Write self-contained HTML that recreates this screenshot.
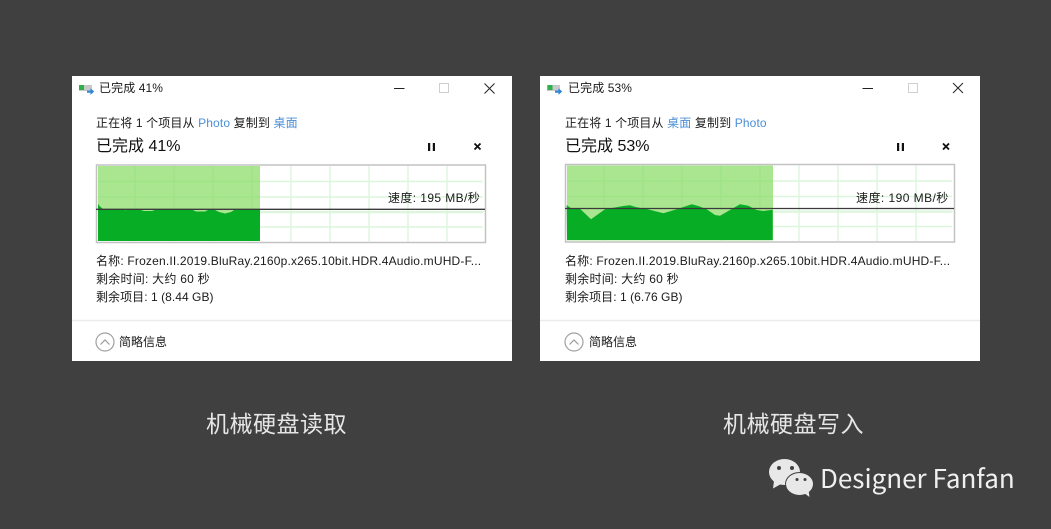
<!DOCTYPE html>
<html><head><meta charset="utf-8">
<style>
html,body{margin:0;padding:0;background:#404040;}
#p{position:relative;width:1051px;height:529px;overflow:hidden;background:#404040;font-family:"Liberation Sans","Noto Sans CJK SC",sans-serif;color:#1a1a1a;}
.t{position:absolute;white-space:pre;font-size:12px;line-height:20px;height:20px;}
.b{color:#4a8fd8;}
.h{font-size:16px;color:#111;}
.c{font-family:"Noto Sans CJK SC",sans-serif;font-weight:400;font-size:23px;line-height:30px;height:30px;color:#e6e6e6;letter-spacing:.5px;}
svg{position:absolute;left:0;top:0;}
</style></head><body><div id="p">
<svg width="1051" height="529" viewBox="0 0 1051 529">
<defs>
<g id="grid" stroke="#dcf5dc" stroke-width="1.400" fill="none">
<path d="M135 166V242M174 166V242M213 166V242M252 166V242M291 166V242M330 166V242M369 166V242M408 166V242M447 166V242"/>
<path d="M98 181.500H483M98 197H483M98 212.500H483M98 227H483"/>
</g>
<g id="gridd" stroke="#9fe386" stroke-width="1.200" fill="none">
<path d="M135 166V210M174 166V210M213 166V210M252 166V210M98 181.500H260M98 197H260"/>
</g>
<g id="win">
<rect x="72" y="76" width="440" height="285" fill="#fff"/>
<rect x="79" y="85" width="13" height="6" fill="#c9c9c9"/>
<rect x="79" y="85" width="5" height="5" fill="#2fb04a"/>
<path d="M87 90.500h3.500v-2.200l3.700 3.200-3.700 3.400v-2.200H87z" fill="#2f86dc"/>
<path d="M394 88.500H404.500" stroke="#222" stroke-width="1"/>
<rect x="439.500" y="83.500" width="9" height="9" fill="none" stroke="#cfcfcf" stroke-width="1"/>
<path d="M484.500 83.500l10 10M494.500 83.500l-10 10" stroke="#222" stroke-width="1" fill="none"/>
<path d="M428 143h2.200v8H428zM432.800 143h2.200v8h-2.200z" fill="#111"/>
<path d="M474.500 143.500l6 6M480.500 143.500l-6 6" stroke="#111" stroke-width="1.800" fill="none"/>
<rect x="96.500" y="165" width="389" height="77.500" fill="#fff" stroke="#c2c2c2" stroke-width="1.500"/>
<use href="#grid"/>
<path d="M72 320.500H512" stroke="#ececec" stroke-width="1.500"/>
<circle cx="105" cy="342" r="9" fill="none" stroke="#a0a0a0" stroke-width="1.200"/>
<path d="M100.500 344.500L105 340l4.500 4.500" fill="none" stroke="#9a9a9a" stroke-width="1.200"/>
</g>
</defs>
<use href="#win"/>
<rect x="98" y="166" width="162" height="75" fill="#a9e68f"/>
<use href="#gridd"/>
<path d="M98 204L100 206.500L103 209L124 209.500L125.500 210.500L127 209.500L139 209.500L144 211L152 211L156 209.500L192 209.500L196 211.500L205 211.500L209 209.500L214 209.500L219 212L225 213.500L231 212L235 209.500L260 209.500V241H98Z" fill="#06ad25"/>
<path d="M96 209.300H485" stroke="#3b3b3b" stroke-width="1.300"/>
<path d="M260 211.500H485" stroke="#dcf5dc" stroke-width="1"/>
<g transform="translate(468 0)"><rect x="72" y="76" width="440" height="285" fill="#fff"/></g>
<g transform="translate(468 0)">
<rect x="79" y="85" width="13" height="6" fill="#c9c9c9"/>
<rect x="79.500" y="85" width="5" height="5" fill="#2fb04a"/>
<path d="M87 90.500h3.500v-2.200l3.700 3.200-3.700 3.400v-2.200H87z" fill="#2f86dc"/>
<path d="M394.500 88.500H405" stroke="#222" stroke-width="1"/>
<rect x="440.500" y="83.500" width="9" height="9" fill="none" stroke="#cfcfcf" stroke-width="1"/>
<path d="M485 83l10 10M495 83l-10 10" stroke="#222" stroke-width="1" fill="none"/>
<path d="M429 143h2.200v8H429zM433.800 143h2.200v8h-2.200z" fill="#111"/>
<path d="M475 143.500l6 6M481 143.500l-6 6" stroke="#111" stroke-width="1.800" fill="none"/>
<path d="M72 320.500H512" stroke="#ececec" stroke-width="1.500"/>
<circle cx="106" cy="342" r="9" fill="none" stroke="#a0a0a0" stroke-width="1.200"/>
<path d="M101.500 344.500L106 340l4.500 4.500" fill="none" stroke="#9a9a9a" stroke-width="1.200"/>
</g>
<g transform="translate(469 -0.500)">
<rect x="96.500" y="165" width="389" height="77.500" fill="#fff" stroke="#c2c2c2" stroke-width="1.500"/>
<use href="#grid"/>
<rect x="98" y="166" width="206" height="75" fill="#a9e68f"/>
<path d="M135 166V210M174 166V210M213 166V210M252 166V210M291 166V210M98 181.500H304M98 197H304" stroke="#9fe386" stroke-width="1.200" fill="none"/>
</g>
<path d="M566.700 205L571.700 208.700L580 208.700L591 219.300L605 209.300L623.300 206L630 205.300L636.700 207.300L646.700 209L663.300 213.300L676.700 209.300L691.700 204.300L698.300 206L706.700 209.300L715 215L720 215.700L730 210L740 204.300L748.300 205.700L756.700 210L763.300 211L772.700 209.700V240H567Z" fill="#06ad25"/>
<path d="M565 208.500H954" stroke="#3b3b3b" stroke-width="1.300"/>
<path d="M774 211H954" stroke="#dcf5dc" stroke-width="1"/>
<ellipse cx="784.500" cy="472" rx="15.500" ry="13" fill="#e8e8e8"/>
<path d="M774 481L773 488.500L781 484Z" fill="#e8e8e8"/>
<circle cx="779" cy="468" r="2" fill="#404040"/>
<circle cx="792" cy="468" r="2" fill="#404040"/>
<ellipse cx="799.500" cy="484" rx="14.500" ry="12" fill="#404040"/>
<ellipse cx="799.500" cy="484" rx="13.500" ry="11" fill="#e8e8e8"/>
<path d="M804 493L809.500 497L808.500 490Z" fill="#e8e8e8"/>
<circle cx="797" cy="479.500" r="1.500" fill="#404040"/>
<circle cx="805" cy="479.500" r="1.500" fill="#404040"/>
</svg>

<div class="t" style="left:99px;top:78px;letter-spacing:.1px">已完成 41%</div>
<div class="t" style="left:96px;top:113px;letter-spacing:.13px">正在将 1 个项目从 <span class="b">Photo</span> 复制到 <span class="b">桌面</span></div>
<div class="t h" style="left:96px;top:137px">已完成 41%</div>
<div class="t" style="left:388px;top:188px;letter-spacing:.4px">速度: 195 MB/秒</div>
<div class="t" style="left:96px;top:251px;letter-spacing:.18px">名称: Frozen.II.2019.BluRay.2160p.x265.10bit.HDR.4Audio.mUHD-F...</div>
<div class="t" style="left:96px;top:269px;letter-spacing:.25px">剩余时间: 大约 60 秒</div>
<div class="t" style="left:96px;top:287px;letter-spacing:.05px">剩余项目: 1 (8.44 GB)</div>
<div class="t" style="left:119px;top:332px">简略信息</div>

<div class="t" style="left:568px;top:78px;letter-spacing:.1px">已完成 53%</div>
<div class="t" style="left:565px;top:113px;letter-spacing:.13px">正在将 1 个项目从 <span class="b">桌面</span> 复制到 <span class="b">Photo</span></div>
<div class="t h" style="left:565px;top:137px">已完成 53%</div>
<div class="t" style="left:856px;top:188px;letter-spacing:.45px">速度: 190 MB/秒</div>
<div class="t" style="left:565px;top:251px;letter-spacing:.18px">名称: Frozen.II.2019.BluRay.2160p.x265.10bit.HDR.4Audio.mUHD-F...</div>
<div class="t" style="left:565px;top:269px;letter-spacing:.25px">剩余时间: 大约 60 秒</div>
<div class="t" style="left:565px;top:287px;letter-spacing:.05px">剩余项目: 1 (6.76 GB)</div>
<div class="t" style="left:589px;top:332px">简略信息</div>

<div class="t c" style="left:206px;top:407px">机械硬盘读取</div>
<div class="t c" style="left:723px;top:407px">机械硬盘写入</div>
<div class="t" style="left:820px;top:458px;font-family:'Noto Sans CJK SC',sans-serif;font-size:26px;line-height:40px;height:40px;color:#f0f0f0;font-weight:400">Designer Fanfan</div>
</div></body></html>
